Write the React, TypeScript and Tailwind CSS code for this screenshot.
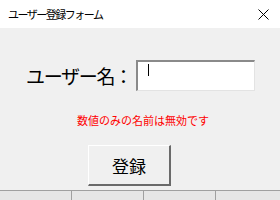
const font = { fontFamily: '"Noto Sans CJK JP", "Liberation Sans", sans-serif' };

export default function App() {
  return (
    <div className="w-[280px] h-[200px] bg-[#f0f0f0] flex flex-col overflow-hidden" style={font}>
      <div className="h-[29px] bg-white flex items-center justify-between pl-[8px] pr-[11px]">
        <span className="text-[11px] tracking-[-1.5px] text-black leading-none">ユーザー登録フォーム</span>
        <svg width="11" height="11" viewBox="0 0 11 11">
          <path d="M0.5 0.5 L10.5 10.5 M10.5 0.5 L0.5 10.5" stroke="#000" strokeWidth="1" />
        </svg>
      </div>
      <div className="flex items-center h-[32px] mt-[32px]">
        <span className="ml-[26px] w-[110px] text-[19px] tracking-[-1.3px] leading-none text-black whitespace-nowrap">ユーザー名：</span>
        <div className="w-[119px] h-[31px] bg-white border-t-2 border-l-2 border-t-[#8a8a8a] border-l-[#8a8a8a] border-b border-r border-b-[#e3e3e3] border-r-[#e3e3e3] flex items-start pl-[10px] pt-[2px]">
          <div className="w-[1px] h-[12px] bg-black" />
        </div>
      </div>
      <div className="mt-[24px] text-center text-[11px] leading-none text-[#ff0000] pl-[6px]">
        数値のみの名前は無効です
      </div>
      <div className="flex mt-[19px]">
        <button className="ml-[88px] w-[83px] h-[41px] bg-[#f0f0f0] border-t border-l border-t-white border-l-white border-b-2 border-r-2 border-b-[#6a6a6a] border-r-[#6a6a6a] text-[17px] leading-none text-black">
          登録
        </button>
      </div>
      <div className="mt-[4px] border-t border-[#a0a0a0] flex h-[10px] bg-[#e6e6e6]">
        <div className="w-[72px] border-r border-[#a0a0a0]" />
        <div className="w-[72px] border-r border-[#a0a0a0]" />
        <div className="w-[72px] border-r border-[#a0a0a0]" />
        <div className="flex-1" />
      </div>
    </div>
  );
}
